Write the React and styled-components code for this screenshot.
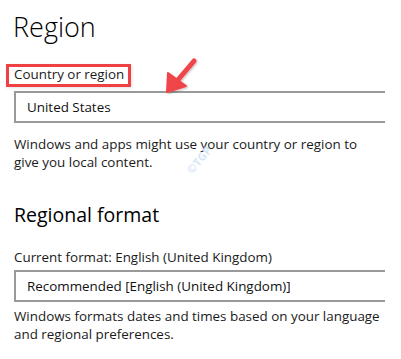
import React from 'react'
import styled, { createGlobalStyle } from 'styled-components'

const Global = createGlobalStyle`
    body {
        margin: 0;
        background: #fff;
        font-family: "Open Sans", "Noto Sans", sans-serif;
        color: #1a1a1a;
    }
`

const Page = styled.div`
    position: relative;
    width: 401px;
    height: 359px;
    overflow: hidden;
    padding: 8px 0 0 14px;
    box-sizing: border-box;
`

const Title = styled.h1`
    margin: 1px 0 0 -1px;
    font-size: 27px;
    line-height: 36px;
    font-weight: 300;
    color: #000;
`

const SubTitle = styled.h2`
    margin: ${p => p.top}px 0 0;
    font-size: 19.5px;
    line-height: 26px;
    font-weight: 400;
    color: #000;
`

const Label = styled.div`
    font-size: 13.4px;
    line-height: 18px;
    margin-top: ${p => p.top}px;
`

const RedBox = styled.div`
    display: inline-block;
    margin: ${p => p.top}px 0 0 -8px;
    padding: 0 4px 3px 5px;
    border: 3px solid #ef4044;
    font-size: 13.4px;
    line-height: 14px;
    box-shadow: 1px 1px 3px rgba(0, 0, 0, 0.12);
`

const Select = styled.div`
    width: 371px;
    height: 32px;
    box-sizing: border-box;
    margin-top: ${p => p.top}px;
    border: 2px solid #999;
    border-right: none;
    padding-left: 11px;
    display: flex;
    align-items: center;
    font-size: 13.4px;
    color: #111;
`

const Desc = styled.p`
    margin: ${p => p.top}px 0 0;
    width: 366px;
    font-size: 13.4px;
    line-height: 18px;
`

const Arrow = styled.svg`
    position: absolute;
    left: 156px;
    top: 54px;
`

const Watermark = styled.div`
    position: absolute;
    left: 183px;
    top: 152px;
    transform: rotate(-50deg);
    font-size: 11px;
    font-weight: 700;
    color: #d5e6f6;
    letter-spacing: 0.3px;
`

export default function App() {
    return (
        <Page>
            <Global />
            <Title>Region</Title>
            <RedBox top={19}>Country or region</RedBox>
            <Select top={4}>United States</Select>
            <Desc top={12}>Windows and apps might use your country or region to give you local content.</Desc>
            <SubTitle top={31}>Regional format</SubTitle>
            <Label top={20}>Current format: English (United Kingdom)</Label>
            <Select top={4}>Recommended [English (United Kingdom)]</Select>
            <Desc top={5}>Windows formats dates and times based on your language and regional preferences.</Desc>
            <Arrow width="48" height="46" viewBox="0 0 48 46">
                <defs>
                    <filter id="sh" x="-30%" y="-30%" width="160%" height="160%">
                        <feDropShadow dx="1" dy="1" stdDeviation="1.2" floodColor="#000" floodOpacity="0.25" />
                    </filter>
                </defs>
                <g filter="url(#sh)" fill="#f04448" stroke="#f04448" strokeLinejoin="round" strokeLinecap="round">
                    <line x1="38" y1="7" x2="21" y2="27" strokeWidth="5" />
                    <polygon points="11,38 12,19 30,32" strokeWidth="2" />
                </g>
            </Arrow>
            <Watermark>©TGP</Watermark>
        </Page>
    )
}
